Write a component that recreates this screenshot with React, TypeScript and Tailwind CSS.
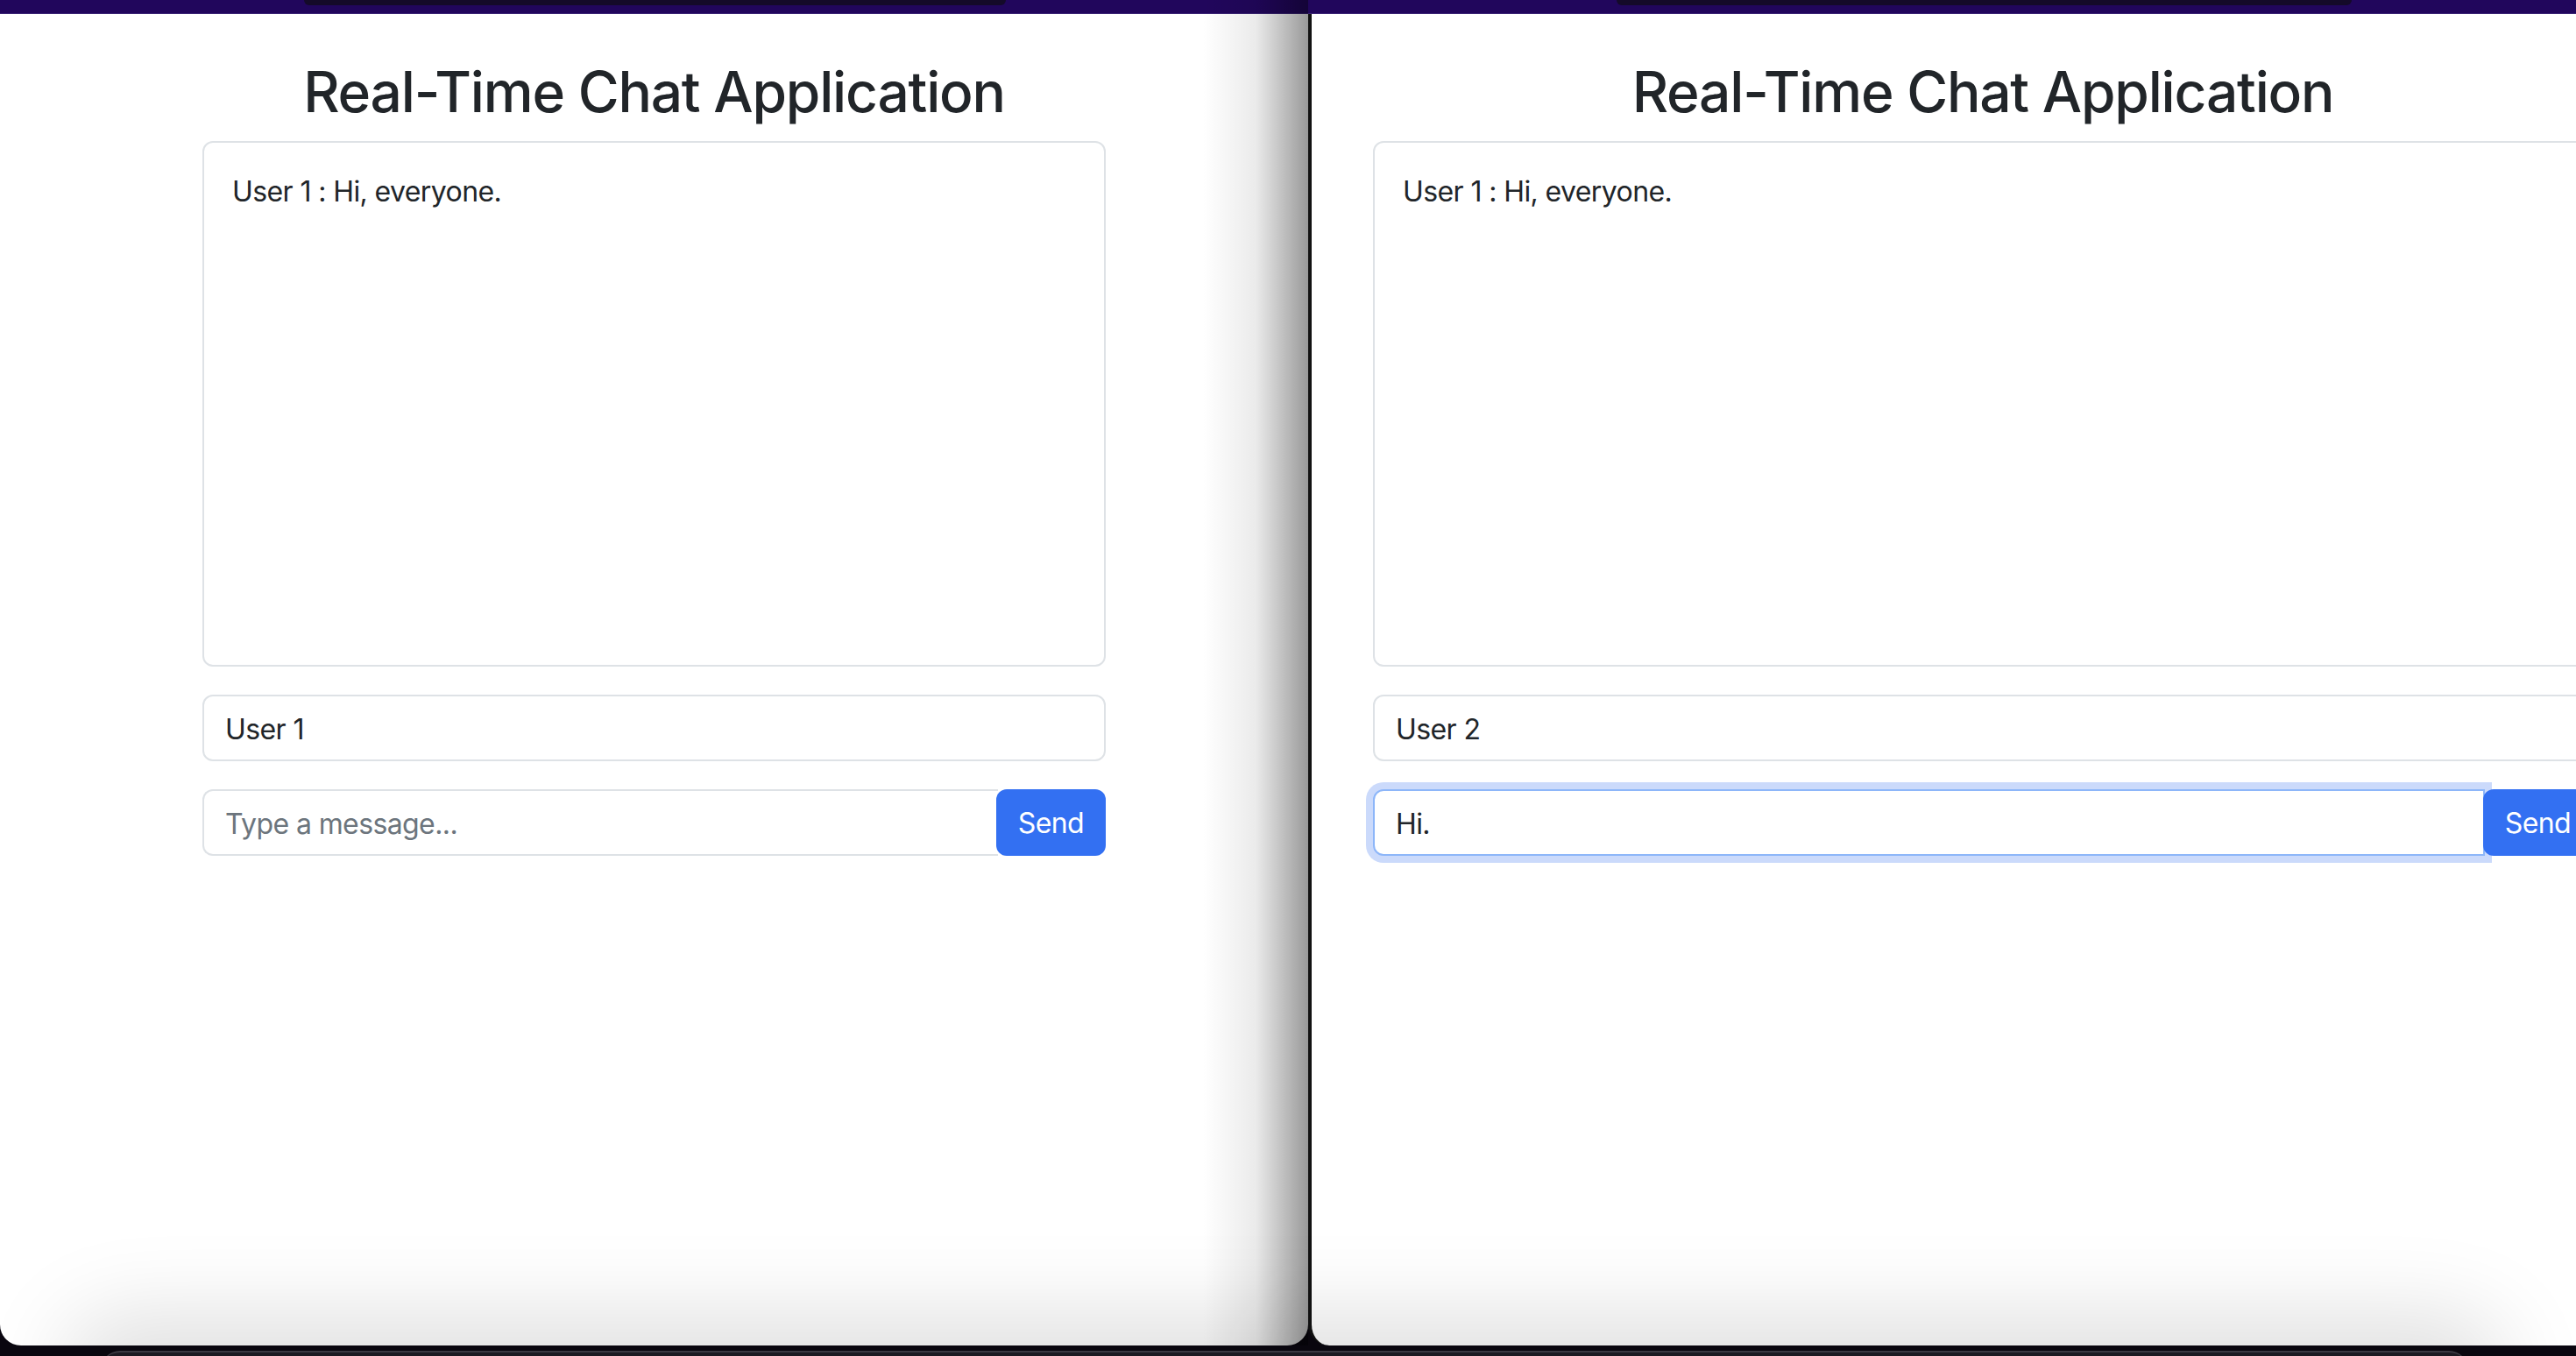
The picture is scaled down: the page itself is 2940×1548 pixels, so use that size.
import React from 'react';

interface ChatWindowProps {
  user: string;
  draft: string;
  focused?: boolean;
  containerClass: string;
}

const ChatWindow: React.FC<ChatWindowProps> = ({ user, draft, focused, containerClass }) => {
  return (
    <div className="pt-[51px]">
      <div className={containerClass}>
        <h1 className="text-center text-[64px] leading-[1.2] font-medium tracking-[-1.2px] text-[#212529] mb-[17px] whitespace-nowrap">
          Real-Time Chat Application
        </h1>

        {/* Messages */}
        <div className="h-[600px] rounded-[12px] border-2 border-[#dee2e6] p-[32px] text-[32px] leading-[1.5] tracking-[-0.6px] text-[#212529]">
          <div>User 1 : Hi, everyone.</div>
        </div>

        {/* Username */}
        <input
          readOnly
          value={user}
          className="mt-[32px] block w-full h-[76px] rounded-[12px] border-2 border-[#dee2e6] bg-white px-[24px] pt-[4px] text-[32px] tracking-[-0.6px] text-[#212529] outline-none"
        />

        {/* Message row */}
        <div className="mt-[32px] flex h-[76px]">
          <input
            readOnly
            value={draft}
            placeholder="Type a message..."
            className={`flex-1 min-w-0 h-full rounded-l-[12px] border-2 bg-white px-[24px] pt-[4px] text-[32px] tracking-[-0.6px] text-[#212529] outline-none placeholder:text-[#6c757d] ${
              focused
                ? 'border-[#8db6f9] shadow-[0_0_0_8px_#cbdafb] relative'
                : 'border-[#dee2e6] border-r-0'
            }`}
          />
          <button className="relative z-10 -ml-[2px] h-full rounded-[12px] bg-[#3370f2] px-[25px] pt-[3px] text-[32px] tracking-[-0.6px] text-white">
            Send
          </button>
        </div>
      </div>
    </div>
  );
};

export default function App() {
  return (
    <div className="relative w-[2940px] h-[1548px] overflow-hidden bg-[#0a0710] font-['Inter','Liberation_Sans',sans-serif]">
      {/* Menu bar */}
      <div className="flex h-[16px] bg-[#21065c] border-b border-[#3a2475]">
        <div className="ml-[347px] w-[801px] h-[6px] rounded-b-[8px] bg-[#140a29]" />
        <div className="ml-[697px] w-[839px] h-[6px] rounded-b-[8px] bg-[#140a29]" />
      </div>

      {/* Windows */}
      <div className="flex h-[1520px]">
        <div className="w-[1493px] h-full bg-white rounded-b-[24px] overflow-hidden">
          <ChatWindow user="User 1" draft="" containerClass="w-[1031px] mx-auto" />
        </div>
        <div className="flex-1 h-full bg-white rounded-bl-[24px] border-l-[4px] border-l-[#121212] overflow-hidden">
          <ChatWindow user="User 2" draft="Hi." focused containerClass="w-[1392px] ml-[70px]" />
        </div>
      </div>

      {/* Shadow cast by right window */}
      <div className="absolute top-0 bottom-[12px] left-[1373px] w-[120px] bg-linear-to-r from-transparent via-black/[0.08] to-black/40 pointer-events-none" />

      {/* Dock */}
      <div className="absolute left-[115px] right-[123px] top-[1542px] h-[40px] rounded-t-[22px] bg-[#1c1a22] border-t-2 border-[#3b3942] shadow-[0_0_100px_40px_rgba(0,0,0,0.13)]" />
    </div>
  );
}
